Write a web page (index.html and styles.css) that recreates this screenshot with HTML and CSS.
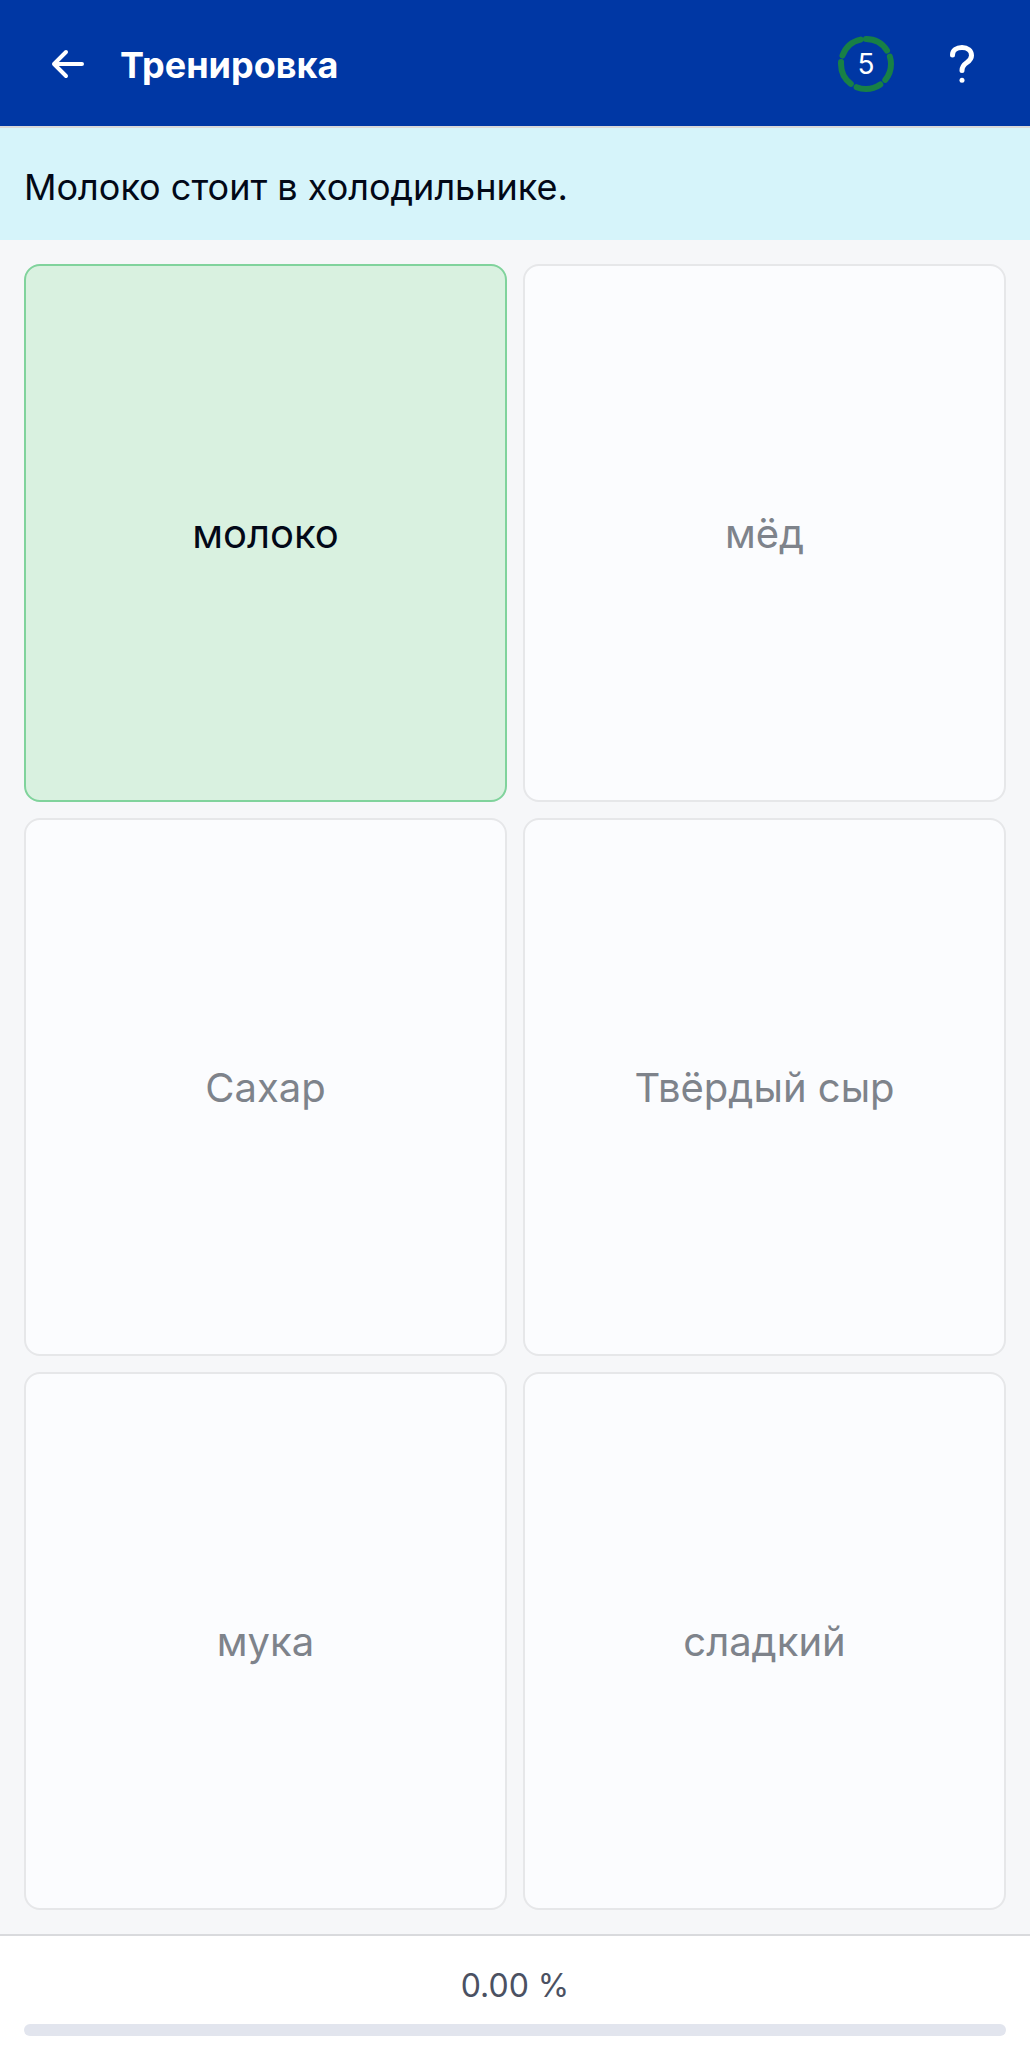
FILE: index.html
```html
<!DOCTYPE html>
<html lang="ru">
<head>
  <meta charset="utf-8">
  <meta name="viewport" content="width=device-width, initial-scale=1">
  <title>Тренировка</title>
  <link rel="stylesheet" href="styles.css">
</head>
<body>
  <header class="topbar">
    <button class="icon-button" type="button" aria-label="Назад">
      <svg width="48" height="48" viewBox="0 0 48 48" fill="none" stroke="currentColor" stroke-width="4" stroke-linecap="round" stroke-linejoin="round" aria-hidden="true">
        <path d="M38 24H10M22 12L10 24l12 12"/>
      </svg>
    </button>
    <h1 class="title">Тренировка</h1>
    <div class="counter">
      <svg class="counter-ring" width="56" height="56" viewBox="0 0 56 56" aria-hidden="true">
        <circle cx="28" cy="28" r="25" fill="none" stroke="currentColor" stroke-width="6" stroke-linecap="round" stroke-dasharray="24.8 6.616" transform="rotate(-90 28 28)"/>
      </svg>
      <span class="counter-value">5</span>
    </div>
    <button class="icon-button" type="button" aria-label="Помощь">
      <svg width="48" height="48" viewBox="0 0 48 48" fill="none" aria-hidden="true">
        <path d="M14.5 15C14.5 10.500 18.500 7.500 24 7.500C29.500 7.500 33.500 10.500 33.500 15.500C33.500 23.500 24 21.500 24 30.500" stroke="currentColor" stroke-width="5" stroke-linecap="round" stroke-linejoin="round"/>
        <circle cx="24" cy="40.300" r="2.500" fill="currentColor"/>
      </svg>
    </button>
  </header>

  <p class="prompt">Молоко стоит в холодильнике.</p>

  <main class="answers">
    <button class="card card-correct" type="button">молоко</button>
    <button class="card" type="button">мёд</button>
    <button class="card" type="button">Сахар</button>
    <button class="card" type="button">Твёрдый сыр</button>
    <button class="card" type="button">мука</button>
    <button class="card" type="button">сладкий</button>
  </main>

  <footer class="progress">
    <span class="progress-label" id="progress-label">0.00 %</span>
    <div class="progress-track" role="progressbar" aria-labelledby="progress-label" aria-valuemin="0" aria-valuemax="100" aria-valuenow="0"></div>
  </footer>
</body>
</html>
```
FILE: styles.css
```css
*,
*::before,
*::after {
  box-sizing: border-box;
}

body {
  display: flex;
  flex-direction: column;
  min-height: 100vh;
  margin: 0;
  background: #f6f7f9;
  color: #020817;
  font-family: Inter, "Liberation Sans", sans-serif;
}

button {
  padding: 0;
  font: inherit;
  cursor: pointer;
}

.topbar {
  display: flex;
  align-items: center;
  min-height: 128px;
  padding: 2px 28px 0;
  border-bottom: 2px solid #d9d9d9;
  background: #0037a4;
  color: #fff;
}

.icon-button {
  display: grid;
  place-items: center;
  width: 80px;
  height: 80px;
  border: 0;
  background: none;
  color: inherit;
}

.title {
  flex: 1;
  margin: 0 0 0 12px;
  padding-top: 2px;
  font-size: 36px;
  font-weight: 700;
  line-height: 56px;
}

.counter {
  display: grid;
  place-items: center;
  margin-right: 28px;
}

.counter-ring,
.counter-value {
  grid-area: 1 / 1;
}

.counter-ring {
  color: #188046;
}

.counter-value {
  font-size: 28px;
  line-height: 40px;
}

.prompt {
  margin: 0;
  padding: 32px 24px 26px;
  background: #d6f4fa;
  font-size: 36px;
  line-height: 54px;
}

.answers {
  flex: 1;
  display: grid;
  grid-template-columns: repeat(2, 1fr);
  grid-auto-rows: 1fr;
  gap: 16px;
  padding: 24px;
}

.card {
  min-height: 120px;
  padding-top: 2px;
  border: 2px solid #e6e7e9;
  border-radius: 16px;
  background: #fbfcfe;
  color: #7e838b;
  font-size: 40px;
  line-height: 56px;
}

.card-correct {
  border-color: #80d39c;
  background: #d9f1e0;
  color: #020817;
}

.progress {
  display: flex;
  flex-direction: column;
  gap: 14px;
  padding: 26px 24px 24px;
  border-top: 2px solid #d9dadd;
  background: #fff;
  text-align: center;
}

.progress-label {
  color: #4b5162;
  font-size: 32px;
  line-height: 48px;
}

.progress-track {
  height: 12px;
  border-radius: 6px;
  background: #e2e5ee;
}
```
